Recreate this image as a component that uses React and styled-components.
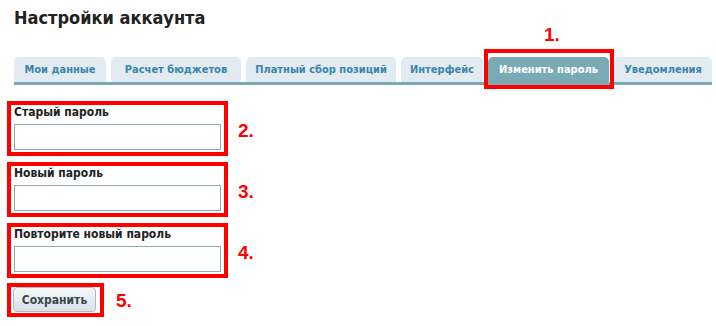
import React from "react";
import styled, { createGlobalStyle } from "styled-components";

const Global = createGlobalStyle`
  html, body { margin: 0; padding: 0; background: #fff; }
  body {
    font-family: "DejaVu Sans Condensed", "DejaVu Sans", sans-serif;
    font-stretch: condensed;
  }
  * { box-sizing: border-box; }
`;

const Page = styled.div`
  padding: 7px 0 0 14px;
  width: 716px;
  height: 326px;
  overflow: hidden;
`;

const Title = styled.h1`
  margin: 0;
  font-size: 18px;
  line-height: 21px;
  font-weight: bold;
  color: #222;
`;

const TabBar = styled.div`
  display: flex;
  gap: 5px;
  margin-top: 29px;
  width: 698px;
  border-bottom: 3px solid #7aaab6;
`;

const Tab = styled.div`
  position: relative;
  height: 25px;
  width: ${(p) => (p.$w ? `${p.$w}px` : "auto")};
  flex: ${(p) => (p.$w ? "none" : 1)};
  display: flex;
  align-items: center;
  justify-content: center;
  border-radius: 5px 5px 0 0;
  background: ${(p) => (p.$active ? "#7aaab6" : "#e1ebf1")};
  color: ${(p) => (p.$active ? "#fff" : "#3b86a8")};
  font-size: 11px;
  font-weight: bold;
  white-space: nowrap;
`;

const Mark = styled.div`
  position: absolute;
  left: -4px;
  right: -5px;
  top: -8px;
  bottom: -7px;
  border: 4px solid #ff0000;
  pointer-events: none;
`;

const MarkNum = styled.span`
  position: absolute;
  top: -33px;
  left: 56px;
  color: #ff0000;
  font-family: "Liberation Sans", Arial, sans-serif;
  font-stretch: normal;
  font-weight: bold;
  font-size: 19px;
  line-height: 22px;
`;

const Form = styled.div`
  display: flex;
  flex-direction: column;
  margin-top: 16px;
  margin-left: -7px;
`;

const Row = styled.div`
  display: flex;
  align-items: center;
  margin-bottom: ${(p) => p.$mb ?? 6}px;
`;

const FieldBox = styled.div`
  width: 221px;
  border: 4px solid #ff0000;
  padding: 0 3px 2px 3px;
  display: flex;
  flex-direction: column;
`;

const Label = styled.label`
  font-size: 12px;
  line-height: 14px;
  font-weight: bold;
  color: #222;
  margin: 0 0 5px 0;
`;

const Input = styled.input`
  width: 207px;
  height: 26px;
  border: 1px solid #8ea7b0;
  background: #fff;
  margin: 0;
  padding: 2px 4px;
  outline: none;
`;

const Num = styled.span`
  color: #ff0000;
  font-family: "Liberation Sans", Arial, sans-serif;
  font-stretch: normal;
  font-weight: bold;
  font-size: 19px;
  line-height: 22px;
  margin-left: ${(p) => p.$ml ?? 10}px;
  margin-top: ${(p) => p.$mt ?? 4}px;
`;

const ButtonBox = styled.div`
  margin-top: -1px;
  border: 4px solid #ff0000;
  padding: 0 4px 1px 2px;
  display: flex;
`;

const Button = styled.button`
  width: 83px;
  height: 25px;
  border: 1px solid #a8bcc4;
  border-radius: 4px;
  background: linear-gradient(#f5f8f9, #d8e2e6);
  color: #3a4850;
  font-family: "DejaVu Sans Condensed", "DejaVu Sans", sans-serif;
  font-stretch: condensed;
  font-size: 12px;
  font-weight: bold;
  padding: 0;
  cursor: pointer;
`;

const tabs = [
  { label: "Мои данные", w: 92 },
  { label: "Расчет бюджетов", w: 130 },
  { label: "Платный сбор позиций", w: 150 },
  { label: "Интерфейс", w: 82 },
  { label: "Изменить пароль", w: 121, active: true },
  { label: "Уведомления" },
];

const fields = [
  { label: "Старый пароль", num: "2." },
  { label: "Новый пароль", num: "3." },
  { label: "Повторите новый пароль", num: "4." },
];

export default function App() {
  return (
    <>
      <Global />
      <Page>
        <Title>Настройки аккаунта</Title>
        <TabBar>
          {tabs.map((t) => (
            <Tab key={t.label} $active={t.active} $w={t.w}>
              {t.label}
              {t.active && (
                <>
                  <Mark />
                  <MarkNum>1.</MarkNum>
                </>
              )}
            </Tab>
          ))}
        </TabBar>
        <Form>
          {fields.map((f) => (
            <Row key={f.label}>
              <FieldBox>
                <Label>{f.label}</Label>
                <Input type="password" />
              </FieldBox>
              <Num>{f.num}</Num>
            </Row>
          ))}
          <Row $mb={0}>
            <ButtonBox>
              <Button>Сохранить</Button>
            </ButtonBox>
            <Num $ml={12} $mt={0}>5.</Num>
          </Row>
        </Form>
      </Page>
    </>
  );
}
